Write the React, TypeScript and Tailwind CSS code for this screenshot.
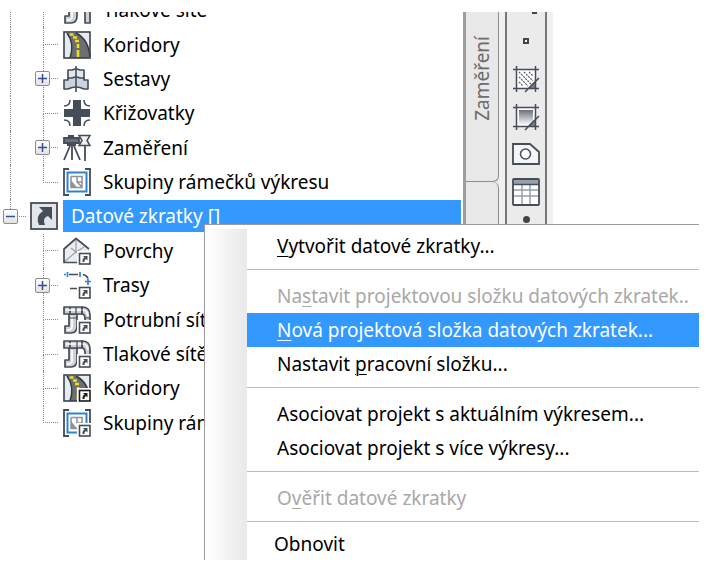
import type { ReactNode } from "react";

const INK = "#454d58";

type IconName = "pipes" | "pressure" | "road" | "assembly" | "cross" | "survey" | "frames" | "surface" | "alignment";

function ShortcutBadge({ dark = false }: { dark?: boolean }) {
  const edge = dark ? "#1c1c1c" : INK;
  return (
    <g>
      <rect x="14" y="14" width="14" height="14" fill="#fff" />
      <rect x="16.5" y="16.5" width="10.5" height="10.5" fill="#fff" stroke={edge} strokeWidth="1.600" />
      <path d="M20 19h4.500v4.500l-1.500-1.500q-2 1-1.500 3h-2q-.5-3 2-4.500z" fill={edge} />
    </g>
  );
}

function Road() {
  return (
    <g>
      <rect x="1" y="1" width="26" height="26" fill="#e6ebf1" />
      <path d="M4 2c6 8 6 16 3 25h20C26 14 20 5 13 2z" fill="#6b6e73" />
      <path d="M4 2c6 8 6 16 3 25M13 2c8 4 13 12 14 24" fill="none" stroke="#35393f" strokeWidth="1.500" />
      <path d="M6.500 3.500h4M10 6.500h4M12 10h4M15 13v4M15 19v7" stroke="#f0df18" strokeWidth="2.600" />
      <rect x="1" y="1" width="26" height="26" fill="none" stroke="#3b424c" strokeWidth="1.600" />
    </g>
  );
}

function Pipes({ pressure }: { pressure?: boolean }) {
  return (
    <g fill="#cdd1d6" stroke={INK} strokeWidth="1.700" strokeLinejoin="round">
      <path d="M20 8q2 1 2 4v15h5V9q0-8-8-8v7z" />
      <path d="M6 8h8v12q0 7-6 7H2v-7h4z" />
      <path d="M1 1h6v7H1zM7 1h12v7H7z" />
      <path d="M9 10v11q0 3-5 3M3 4h17q4 0 5 6" fill="none" stroke="#fff" strokeWidth="1.600" />
      {pressure ? (
        <path d="M19 1v7M14 1v7" strokeWidth="1.200" />
      ) : (
        <path d="M13 1v7M19 1v7M6 12h8M21 12h6" strokeWidth="1.200" />
      )}
    </g>
  );
}

function TreeIcon({ name, shortcut }: { name: IconName; shortcut?: boolean }) {
  const art: Record<IconName, ReactNode> = {
    pipes: <Pipes />,
    pressure: <Pipes pressure />,
    road: <Road />,
    assembly: (
      <g stroke={INK} strokeWidth="1.600" strokeLinejoin="round">
        <path d="M5 14V5h4q4-2 8 0h4v9" fill="#e4e8ed" />
        <path d="M1 24v-9h4v-2h4q4-2 8 0h4v2h4v9h-4q-8-4-16 0z" fill="#ccd4dd" />
        <path d="M13 1v26" fill="none" />
      </g>
    ),
    cross: (
      <g>
        <path d="M10 1h8v9h9v8h-9v9h-8v-9H1v-8h9z" fill={INK} />
        <path d="M7 1q0 6-6 6M21 1q0 6 6 6M7 27q0-6-6-6M21 27q0-6 6-6" fill="none" stroke={INK} strokeWidth="1.500" />
      </g>
    ),
    survey: (
      <g stroke={INK} strokeWidth="1.800">
        <path d="M1 4h15v5H1z" fill="#6a717c" />
        <path d="M5 2h6M4 11h9M9 11v15M7 12L1 26M11 12l6 14M22 12v15" fill="none" />
        <path d="M16 1.500h11L24 6.500l3 5H16l3-5z" fill="#eef0f2" strokeWidth="1.500" />
      </g>
    ),
    frames: (
      <g fill="none">
        <path d="M6 1H1v26h5M22 1h5v26h-5" stroke={INK} strokeWidth="1.800" />
        <rect x="4.500" y="4.500" width="19" height="19" fill="#fff" stroke="#2c84d3" strokeWidth="2" />
        <path d="M8 8.500h12M8 8.500v11h11v-11M14 9v5l5 5M14 14h5" stroke="#8f9296" strokeWidth="1.500" />
        <path d="M8 12v7.500h6z" fill="#8f9296" />
      </g>
    ),
    surface: (
      <g strokeLinejoin="round">
        <path d="M1 11L13 1l13 10v14H1z" fill="#ebedf0" />
        <path d="M1 25l12-10 13 10M13 2v13M8 11l5 4 8-5" fill="none" stroke="#9aa0a7" strokeWidth="1.200" />
        <path d="M26 12L13 1.500 1 12v13.500h14" fill="none" stroke={INK} strokeWidth="1.700" />
      </g>
    ),
    alignment: (
      <g fill="none" strokeWidth="1.700">
        <path d="M6 3.500h9M7 17.500h7M20 3.500q4 1 5 4" stroke={INK} />
        <path d="M1 3.500h2M4.500 1v5M17 1v5M22 10.500h6M25 8v6" stroke="#2c84d3" />
      </g>
    ),
  };
  return (
    <svg viewBox="0 0 28 28" className="size-7 shrink-0" aria-hidden="true">
      {art[name]}
      {shortcut && <ShortcutBadge dark={name === "road"} />}
    </svg>
  );
}

function Toggle({ open, label }: { open?: boolean; label: string }) {
  return (
    <button
      type="button"
      aria-label={label}
      aria-expanded={!!open}
      className="grid size-[15px] shrink-0 place-items-center rounded-[2px] border border-[#8c8c8c] bg-linear-to-b from-white to-[#e2e2e2]"
    >
      <svg viewBox="0 0 9 9" className="size-[9px]" aria-hidden="true">
        <path d={open ? "M0 4.500h9" : "M0 4.500h9M4.500 0v9"} stroke="#34508f" strokeWidth="1.500" />
      </svg>
    </button>
  );
}

type Node = { label: string; icon: IconName; expandable?: boolean };

function ChildRow({ node, shortcut, last, root }: { node: Node; shortcut?: boolean; last?: boolean; root?: boolean }) {
  return (
    <div role="treeitem" className="flex items-center">
      <div className="w-[10px] shrink-0" />
      <div className={`w-[33px] shrink-0 self-stretch border-l ${root ? "border-dotted border-[#8a8a8a]" : "border-transparent"}`} />
      <div className="grid w-5 shrink-0 items-center self-stretch">
        <div className="col-start-1 row-start-1 flex h-full w-[15px] flex-col">
          <div className="flex-1 border-b border-l border-dotted border-[#8a8a8a]" />
          <div className={`flex-1 border-l ${last ? "border-transparent" : "border-dotted border-[#8a8a8a]"}`} />
        </div>
        {node.expandable && (
          <div className="col-start-1 row-start-1 -ml-2">
            <Toggle label={`Rozbalit ${node.label}`} />
          </div>
        )}
      </div>
      <TreeIcon name={node.icon} shortcut={shortcut} />
      <span className="ml-3 whitespace-nowrap">{node.label}</span>
    </div>
  );
}

const upper: Node[] = [
  { label: "Tlakové sítě", icon: "pressure" },
  { label: "Koridory", icon: "road" },
  { label: "Sestavy", icon: "assembly", expandable: true },
  { label: "Křižovatky", icon: "cross" },
  { label: "Zaměření", icon: "survey", expandable: true },
  { label: "Skupiny rámečků výkresu", icon: "frames" },
];

const lower: Node[] = [
  { label: "Povrchy", icon: "surface" },
  { label: "Trasy", icon: "alignment", expandable: true },
  { label: "Potrubní sítě", icon: "pipes" },
  { label: "Tlakové sítě", icon: "pressure" },
  { label: "Koridory", icon: "road" },
  { label: "Skupiny rámečků výkresu", icon: "frames" },
];

function Tree() {
  return (
    <div className="mt-3 w-[461px] shrink-0 overflow-hidden">
      <div role="tree" className="-mt-[19px] grid h-[447px] auto-rows-fr">
        {upper.map((n, i) => (
          <ChildRow key={n.label} node={n} root last={i === upper.length - 1} />
        ))}
        <div role="treeitem" aria-selected="true" className="flex items-center">
          <div className="grid w-[30px] shrink-0 items-center self-stretch">
            <div className="col-start-1 row-start-1 ml-[10px] flex h-full w-4 flex-col">
              <div className="flex-1 border-b border-l border-dotted border-[#8a8a8a]" />
              <div className="flex-1" />
            </div>
            <div className="col-start-1 row-start-1 ml-[3px]">
              <Toggle open label="Sbalit Datové zkratky" />
            </div>
          </div>
          <svg viewBox="0 0 28 28" className="size-7 shrink-0" aria-hidden="true">
            <rect x="1" y="1" width="26" height="26" fill="#e2e6eb" stroke={INK} strokeWidth="1.800" />
            <path d="M9 5h13v13l-4-4q-6 2-3 9H9q-4-9 4-14z" fill={INK} />
          </svg>
          <span className="ml-[5px] flex h-8 flex-1 items-center bg-[#3399ff] pl-2 text-white">Datové zkratky []</span>
        </div>
        {lower.map((n, i) => (
          <ChildRow key={n.label} node={n} shortcut last={i === lower.length - 1} />
        ))}
      </div>
    </div>
  );
}

function HatchFrame({ gradient }: { gradient?: boolean }) {
  return (
    <svg viewBox="0 0 28 28" className="size-7" aria-hidden="true">
      <defs>
        <linearGradient id="shade" x1="0" y1="0" x2="0" y2="1">
          <stop offset="0" stopColor="#6b7078" />
          <stop offset="1" stopColor="#f2f3f4" />
        </linearGradient>
      </defs>
      <rect x="5" y="5" width="18" height="18" fill="#fff" />
      {gradient ? (
        <rect x="7" y="7" width="14" height="14" fill="url(#shade)" />
      ) : (
        <path d="M7 7l14 14M7 12l9 9M7 17l4 4M12 7l9 9M17 7l4 4" stroke="#555c66" strokeWidth="1.200" strokeDasharray="2 1" />
      )}
      <path d="M15 24l9-9v9z" fill="#7b828c" />
      <path d="M1 4.500h26M1 23.500h26M4.500 1v26M23.500 1v26M13 27l14-14" fill="none" stroke={INK} strokeWidth="1.500" />
    </svg>
  );
}

function Toolbar() {
  return (
    <div className="mt-3 flex h-[213px] shrink-0 overflow-hidden">
      <div className="ml-0.5 w-[3px] bg-[#9d9d9d]" />
      <div className="flex w-[33px] flex-col bg-[#e8e8e8]">
        <button
          type="button"
          className="flex h-[170px] w-full items-center justify-start rounded-br-md border-r border-b border-[#8e8e8e] pt-6 text-[#6c6c6c] [writing-mode:vertical-rl]"
        >
          <span className="rotate-180">Zaměření</span>
        </button>
        <div className="w-full flex-1 rounded-tr-md border-r border-[#8e8e8e]" />
      </div>
      <div className="w-[6px] bg-[#f0f0f0]" />
      <div className="flex w-[42px] flex-col items-center border-x-2 border-[#777] bg-[#ebebeb]">
        <div className="ml-4 h-0.5 w-[5px] shrink-0 bg-[#444]" />
        <button type="button" aria-label="Bod" className="mt-[24px] size-[6px] shrink-0 border-2 border-[#444] bg-white" />
        <button type="button" aria-label="Šrafy" className="mt-[21px] size-7 shrink-0">
          <HatchFrame />
        </button>
        <button type="button" aria-label="Přechod" className="mt-[10px] size-7 shrink-0">
          <HatchFrame gradient />
        </button>
        <button type="button" aria-label="Oblast" className="mt-[9px] size-7 shrink-0">
          <svg viewBox="0 0 28 28" className="size-7" aria-hidden="true">
            <path d="M1 4h17l9 8v12H1z" fill="#f3f5f7" stroke={INK} strokeWidth="1.800" />
            <circle cx="13.500" cy="14" r="5" fill="#fff" stroke={INK} strokeWidth="1.500" />
          </svg>
        </button>
        <button type="button" aria-label="Tabulka" className="mt-[10px] size-7 shrink-0">
          <svg viewBox="0 0 28 28" className="size-7" aria-hidden="true">
            <rect x="1" y="1" width="26" height="26" rx="1" fill="#fff" />
            <path d="M1 1h26v5H1z" fill="#98a0ad" />
            <path d="M2 12h24M2 18h24M10 7v19M18 7v19" stroke="#9a9fa6" strokeWidth="1.500" />
            <path d="M1 6.500h26" stroke={INK} strokeWidth="1.500" />
            <rect x="1" y="1" width="26" height="26" rx="1" fill="none" stroke={INK} strokeWidth="1.800" />
          </svg>
        </button>
        <div className="mt-[10px] size-[7px] shrink-0 rounded-full bg-[#444]" />
      </div>
      <div className="w-[6px] bg-[#f1f1f1]" />
    </div>
  );
}

function Item({ children, disabled, active, flush }: { children: ReactNode; disabled?: boolean; active?: boolean; flush?: boolean }) {
  return (
    <button
      type="button"
      role="menuitem"
      disabled={disabled}
      className={`flex h-[34px] w-full shrink-0 items-center overflow-hidden text-left whitespace-pre ${flush ? "pl-[27px]" : "pl-[30px]"} ${
        active ? "bg-[#3399ff] text-white" : disabled ? "text-[#a8a8a8]" : "text-black"
      }`}
    >
      <span>{children}</span>
    </button>
  );
}

function Separator({ tight }: { tight?: boolean }) {
  return <div role="separator" className={`mt-[6px] h-px shrink-0 bg-[#bcbcbc] ${tight ? "mb-[5px]" : "mb-[9px]"}`} />;
}

function K({ children }: { children: string }) {
  return <span className="underline decoration-1 underline-offset-3">{children}</span>;
}

function ContextMenu() {
  return (
    <div role="menu" className="absolute top-56 right-4 left-[204px] flex h-[336px] overflow-hidden border-t border-l border-[#9b9b9b] bg-white pt-1">
      <div className="w-[42px] shrink-0 bg-linear-to-r from-white to-[#e9e9e9]" />
      <div className="flex min-w-0 flex-1 flex-col">
        <Item><K>V</K>ytvořit datové zkratky...</Item>
        <Separator />
        <Item disabled>Na<K>s</K>tavit projektovou složku datových zkratek..</Item>
        <Item active><K>N</K>ová projektová složka datových zkratek...</Item>
        <Item>Nastavit <K>p</K>racovní složku...</Item>
        <Separator />
        <Item>Asociovat projekt s aktuálním výkresem...</Item>
        <Item>Asociovat projekt s více výkresy...</Item>
        <Separator />
        <Item disabled>O<K>v</K>ěřit datové zkratky</Item>
        <Separator tight />
        <Item flush>Obnovit</Item>
      </div>
    </div>
  );
}

export default function App() {
  return (
    <main className="relative min-h-[567px] overflow-hidden bg-white font-['Noto_Sans',sans-serif] text-[19px] leading-6 text-black">
      <div className="flex items-start">
        <Tree />
        <Toolbar />
      </div>
      <ContextMenu />
    </main>
  );
}
